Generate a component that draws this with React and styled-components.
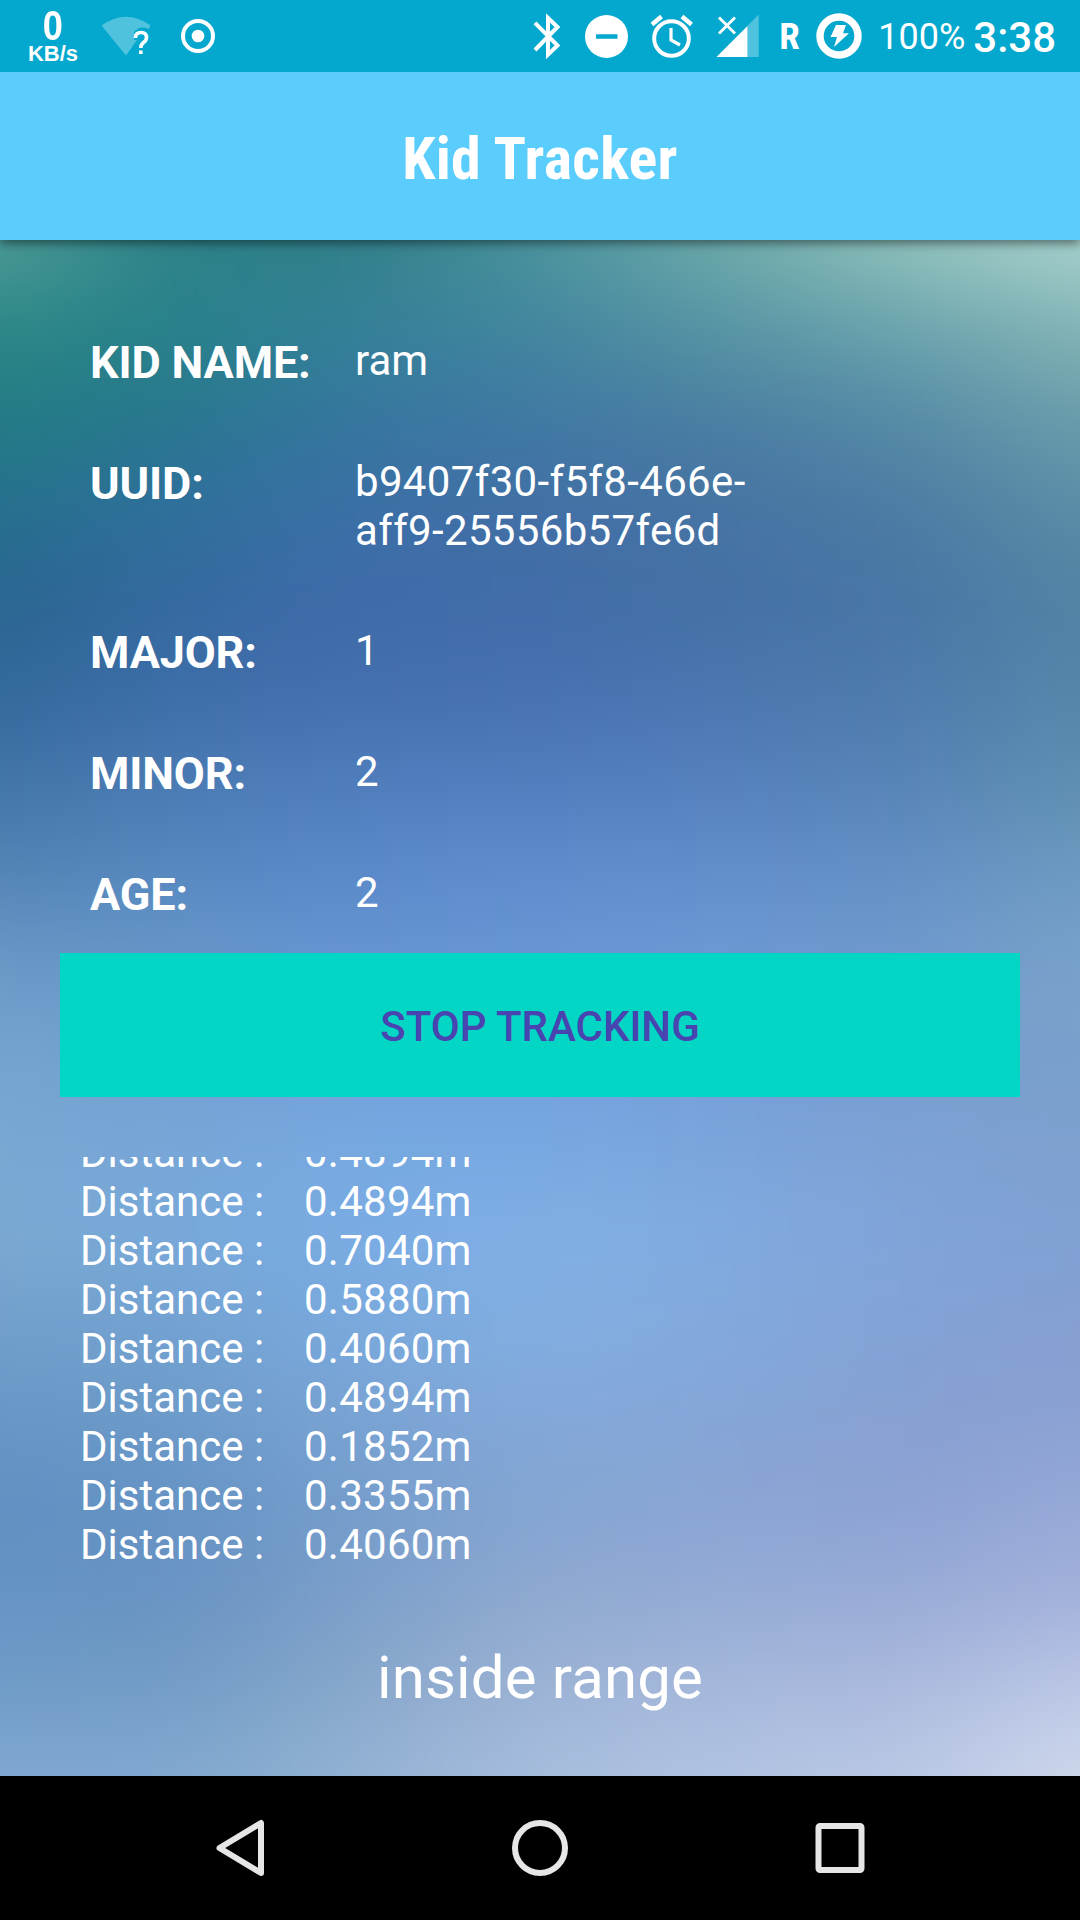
import React from "react";
import styled, { createGlobalStyle } from "styled-components";

const GlobalStyle = createGlobalStyle`
  * { box-sizing: border-box; }
  body { margin: 0; background: #000; font-family: Roboto, "Noto Sans", sans-serif; color: #fff; }
`;

const Screen = styled.div`
  width: 1080px;
  height: 1920px;
  display: flex;
  flex-direction: column;
  overflow: hidden;
`;

const StatusBar = styled.header`
  height: 72px;
  flex: none;
  display: flex;
  justify-content: space-between;
  background: #04a8ce;
  padding: 0 24px 0 28px;
  z-index: 2;
`;

const StatusGroup = styled.div`
  display: flex;
  align-items: flex-start;
`;

const Glyph = styled.svg`
  display: block;
  flex: none;
  margin-left: ${(p) => p.$gap || 0}px;
`;

const NetSpeed = styled.div`
  width: 50px;
  display: flex;
  flex-direction: column;
  align-items: center;
  font-family: "Liberation Sans", sans-serif;
  font-weight: 700;
`;

const SpeedValue = styled.span`
  font-size: 42px;
  line-height: 34px;
  margin-top: 9px;
  transform: scaleX(0.86);
`;

const SpeedUnit = styled.span`
  font-size: 22px;
  line-height: 22px;
`;

const Roaming = styled.span`
  font-family: "Roboto Condensed", Roboto, sans-serif;
  font-size: 37px;
  font-weight: 700;
  line-height: 73px;
  width: 21px;
  margin-left: 19px;
`;

const Battery = styled.span`
  font-size: 36px;
  line-height: 75px;
  margin-left: 16px;
  width: 95px;
  white-space: nowrap;
  font-weight: 400;
`;

const Clock = styled.span`
  font-size: 42px;
  font-weight: 500;
  line-height: 75px;
  white-space: nowrap;
`;

const AppBar = styled.div`
  height: 168px;
  flex: none;
  display: flex;
  align-items: center;
  justify-content: center;
  background: #5acdfd;
  box-shadow: 0 3px 10px rgba(0, 0, 0, 0.5);
  z-index: 1;
`;

const Title = styled.h1`
  margin: 5px 0 0;
  font-family: "Roboto Condensed", Roboto, sans-serif;
  font-size: 60px;
  line-height: 70px;
  font-weight: 700;
  letter-spacing: 0.3px;
  white-space: nowrap;
`;

const Content = styled.main`
  position: relative;
  z-index: 0;
  flex: 1;
  display: flex;
  flex-direction: column;
  padding: 96px 60px 0;
  overflow: hidden;
`;

const Backdrop = styled.svg`
  position: absolute;
  inset: 0;
  z-index: -1;
`;

const Details = styled.dl`
  margin: 0;
  height: 617px;
  display: flex;
  flex-direction: column;
  gap: 72px;
  padding-left: 30px;
`;

const DetailRow = styled.div`
  display: grid;
  grid-template-columns: 265px 420px;
  margin-bottom: ${(p) => (p.$multiline ? -1 : 0)}px;
`;

const Label = styled.dt`
  height: 49px;
  font-size: 45px;
  line-height: 53px;
  font-weight: 700;
  letter-spacing: -0.15px;
  white-space: nowrap;
`;

const Value = styled.dd`
  margin: 0;
  font-size: 42px;
  line-height: 49px;
  letter-spacing: ${(p) => (p.$spaced ? 0.34 : 0)}px;
`;

const StopButton = styled.button`
  height: 144px;
  flex: none;
  border: 0;
  padding: 2px 0 0;
  background: #03d6c4;
  color: #4844b0;
  font: 500 42px/49px Roboto, sans-serif;
`;

const Log = styled.div`
  margin-top: 60px;
  height: 412px;
  flex: none;
  display: flex;
  flex-direction: column;
  justify-content: flex-end;
  overflow: hidden;
  padding-left: 20px;
`;

const LogRow = styled.div`
  flex: none;
  display: grid;
  grid-template-columns: 224px auto;
  font-size: 42px;
  line-height: 49px;
`;

const Distance = styled.span`
  letter-spacing: 0.25px;
`;

const RangeStatus = styled.p`
  margin: 74px 0 0;
  text-align: center;
  font-size: 60px;
  line-height: 70px;
  letter-spacing: 0.15px;
`;

const NavBar = styled.nav`
  height: 144px;
  flex: none;
  display: grid;
  grid-template-columns: repeat(3, 300px);
  justify-content: center;
  place-items: center;
  background: #000;
`;

const details = [
  { label: "KID NAME:", value: "ram" },
  { label: "UUID:", value: "b9407f30-f5f8-466e-aff9-25556b57fe6d", multiline: true },
  { label: "MAJOR:", value: "1" },
  { label: "MINOR:", value: "2" },
  { label: "AGE:", value: "2" },
];

const distances = ["0.4894m", "0.4894m", "0.7040m", "0.5880m", "0.4060m", "0.4894m", "0.1852m", "0.3355m", "0.4060m"];

// Horizontal colour bands, top to bottom; neighbours are blended by a vertical blur.
const bands = [
  ["#4f9c98", "#2c8187", "#317f89", "#4b949d", "#6daaab", "#8fc1bc", "#a8d2ce"],
  ["#2b8784", "#27818a", "#34809a", "#42859f", "#5793a3", "#6aa3ad", "#82b3b5"],
  ["#237b84", "#28768f", "#36769f", "#4178a3", "#4a7da2", "#558aa6", "#6a9daa"],
  ["#256f8d", "#2f6f9c", "#3b6fa7", "#426fa6", "#4674a3", "#4b7ba3", "#5a8ea7"],
  ["#29658f", "#3569a0", "#3f6ba9", "#416ca8", "#4470a6", "#4876a5", "#5084a4"],
  ["#33689c", "#3d6ea8", "#446fae", "#4771b0", "#4b76b0", "#4e7bac", "#5588aa"],
  ["#4174a8", "#4b7bb3", "#4f7dbc", "#527ebf", "#5580bd", "#5784b7", "#5f90b0"],
  ["#5384b5", "#5789c0", "#5b8aca", "#5f8ccd", "#628fcb", "#6490c6", "#6d9bc0"],
  ["#6a99c6", "#6796c9", "#6695d3", "#6997d5", "#6d99d4", "#6f99ce", "#79a3c8"],
  ["#74a4ce", "#709fd1", "#709fd9", "#70a0dc", "#749dd8", "#759dcf", "#7aa1cb"],
  ["#79a8d3", "#77a5d7", "#77a9e1", "#78a8e1", "#7aa4dc", "#7da1d4", "#7da0ce"],
  ["#7ba9d2", "#77a9d9", "#79ace4", "#80afe5", "#80abe0", "#80a4d9", "#80a0d2"],
  ["#729fcb", "#73a2d2", "#79a9dd", "#82aee1", "#82a9dc", "#83a2d5", "#869fd2"],
  ["#6797c5", "#6c9bca", "#79a3d3", "#83a9da", "#85a5d7", "#86a0d2", "#8aa1d2"],
  ["#6090c2", "#6493c4", "#759dcc", "#84a5d2", "#8aa5d3", "#8ca2d2", "#97a9d7"],
  ["#6493c3", "#6892c2", "#7c9fc9", "#8ea9d0", "#94abd6", "#98abd7", "#a3b1dc"],
  ["#6f9bc8", "#719cc5", "#87a7cb", "#9cb2d4", "#a5b8db", "#aab8dc", "#bcc7e6"],
  ["#7fa8d1", "#81a8cf", "#93b2d4", "#a7bedd", "#b1c3e2", "#bac8e5", "#cfd8ec"],
];

const BAND = 90;

function Background() {
  return (
    <Backdrop width="1080" height="1536" viewBox="0 0 1080 1536" aria-hidden="true">
      <defs>
        <filter id="blend" filterUnits="userSpaceOnUse" x="-200" y="-200" width="1480" height="1936" colorInterpolationFilters="sRGB">
          <feGaussianBlur stdDeviation="46 40" />
        </filter>
        {bands.map((colors, i) => (
          <linearGradient key={i} id={`band${i}`} gradientUnits="userSpaceOnUse" x1="-10" x2="1090" y1="0" y2="0">
            {colors.map((c, j) => (
              <stop key={j} offset={j / (colors.length - 1)} stopColor={c} />
            ))}
          </linearGradient>
        ))}
      </defs>
      <g filter="url(#blend)">
        {bands.map((_, i) => {
          const first = i === 0;
          const last = i === bands.length - 1;
          return (
            <rect
              key={i}
              x="-200"
              width="1480"
              y={first ? -200 : i * BAND - 42}
              height={first ? 249 : last ? 400 : BAND + 1}
              fill={`url(#band${i})`}
            />
          );
        })}
      </g>
    </Backdrop>
  );
}

function StatusIcons() {
  return (
    <StatusBar>
      <StatusGroup>
        <NetSpeed>
          <SpeedValue>0</SpeedValue>
          <SpeedUnit>KB/s</SpeedUnit>
        </NetSpeed>
        <Glyph $gap={22} width="52" height="72" viewBox="100 0 52 72">
          <path d="M101.500 25.500Q126 8 150.500 25.500L148.500 29Q140 25 134 32V40H137L126 55.500Z" fill="#fff" fillOpacity=".3" />
          <path d="M135.500 38Q135.500 32.500 141 32.500Q146.500 32.500 146.500 37.500Q146.500 40.500 143.500 42.500Q140.800 44.500 140.800 48M140.800 50.500V54" fill="none" stroke="#fff" strokeWidth="3.600" />
        </Glyph>
        <Glyph $gap={28} width="36" height="72" viewBox="180 0 36 72">
          <circle cx="198" cy="36" r="15" fill="none" stroke="#fff" strokeWidth="4" />
          <circle cx="198" cy="36" r="6.300" fill="#fff" />
        </Glyph>
      </StatusGroup>
      <StatusGroup>
        <Glyph width="28" height="72" viewBox="533 0 28 72">
          <path d="M535 22.800L557.500 45.500L548 54.500V18L557.500 27L535 50" fill="none" stroke="#fff" strokeWidth="4" />
        </Glyph>
        <Glyph $gap={23} width="44" height="72" viewBox="584 0 44 72">
          <circle cx="606.500" cy="36.500" r="21.500" fill="#fff" />
          <path d="M596 36.500H617.500" stroke="#04a8ce" strokeWidth="4.500" />
        </Glyph>
        <Glyph $gap={22} width="43" height="72" viewBox="650 0 43 72">
          <g fill="none" stroke="#fff">
            <circle cx="671.500" cy="38.500" r="17.300" strokeWidth="4" />
            <path d="M671 28V40L680 45" strokeWidth="3.200" />
            <path d="M652 24.500L661.500 16.500M682 16.500L691.500 24.500" strokeWidth="4.500" />
          </g>
        </Glyph>
        <Glyph $gap={23} width="44" height="72" viewBox="716 0 44 72">
          <path d="M758.700 14.500V57H747.500V25.700Z" fill="#fff" fillOpacity=".3" />
          <path d="M716.500 57L747.500 26V57Z" fill="#fff" />
          <path d="M719 17.500L735 33.500M735 17.500L719 33.500" stroke="#fff" strokeWidth="2.800" />
        </Glyph>
        <Roaming>R</Roaming>
        <Glyph $gap={16} width="46" height="72" viewBox="816 0 46 72">
          <circle cx="839" cy="36" r="19" fill="none" stroke="#fff" strokeWidth="7.400" />
          <path d="M836 25H846L843 33.200H849L834 47L837 37H830.500Z" fill="#fff" />
        </Glyph>
        <Battery>100%</Battery>
        <Clock>3:38</Clock>
      </StatusGroup>
    </StatusBar>
  );
}

export default function App() {
  return (
    <Screen>
      <GlobalStyle />
      <StatusIcons />
      <AppBar>
        <Title>Kid Tracker</Title>
      </AppBar>
      <Content>
        <Background />
        <Details>
          {details.map(({ label, value, multiline }) => (
            <DetailRow key={label} $multiline={multiline}>
              <Label>{label}</Label>
              <Value $spaced={multiline}>{value}</Value>
            </DetailRow>
          ))}
        </Details>
        <StopButton>STOP TRACKING</StopButton>
        <Log>
          {distances.map((d, i) => (
            <LogRow key={i}>
              <span>Distance :</span>
              <Distance>{d}</Distance>
            </LogRow>
          ))}
        </Log>
        <RangeStatus>inside range</RangeStatus>
      </Content>
      <NavBar>
        <svg width="60" height="60" viewBox="0 0 60 60">
          <path d="M51 5V55L9.500 30Z" fill="none" stroke="#e6e6e6" strokeWidth="6" strokeLinejoin="round" />
        </svg>
        <svg width="60" height="60" viewBox="0 0 60 60">
          <circle cx="30" cy="30" r="25" fill="none" stroke="#e6e6e6" strokeWidth="6" />
        </svg>
        <svg width="60" height="60" viewBox="0 0 60 60">
          <rect x="8.500" y="8" width="43" height="44" rx="1.500" fill="none" stroke="#e6e6e6" strokeWidth="6" />
        </svg>
      </NavBar>
    </Screen>
  );
}
